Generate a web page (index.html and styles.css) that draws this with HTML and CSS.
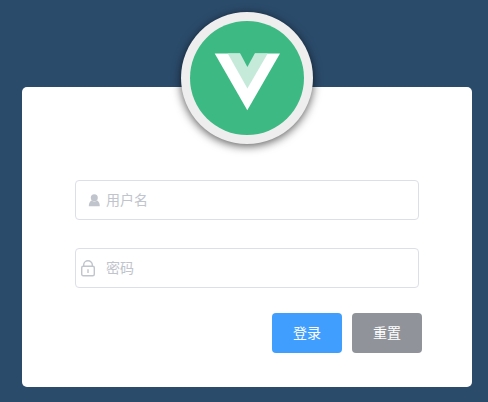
FILE: index.html
```html
<!DOCTYPE html>
<html lang="zh-CN">
<head>
<meta charset="utf-8">
<title>登录</title>
<link rel="stylesheet" href="styles.css">
</head>
<body>
<main class="login-card">
  <div class="avatar">
    <svg viewBox="190 21 114 114" width="114" height="114">
      <circle cx="247" cy="78" r="57" fill="#3db983"/>
      <path d="M214.7 53.5H280L247.3 110.3z" fill="#fff"/>
      <path d="M227.7 53.5H267.7L247.4 88.5z" fill="#c5eada"/>
      <path d="M240 53H255L247.4 67z" fill="#3db983"/>
    </svg>
  </div>
  <form class="login-form">
    <label class="field">
      <svg class="icon-user" width="12" height="13" viewBox="0 0 12 13" fill="#c0c4cc">
        <circle cx="6.3" cy="3.8" r="3.5"/>
        <path d="M3.4 6.4Q6.3 8.4 9.2 6.4 11.8 8 11.8 12.2H.8Q.8 8 3.4 6.4z"/>
      </svg>
      <input class="input" type="text" placeholder="用户名">
    </label>
    <label class="field">
      <svg class="icon-lock" width="14" height="17" viewBox="0 0 14 17" fill="none" stroke="#c0c4cc" stroke-width="1.4">
        <rect x=".7" y="6.2" width="12.6" height="9.6" rx="1.5"/>
        <path d="M2.7 6V4.8a4.3 4.1 0 0 1 8.6 0V6M7 9.3v3.6"/>
      </svg>
      <input class="input" type="password" placeholder="密码">
    </label>
    <div class="actions">
      <button class="btn btn-primary" type="button">登录</button>
      <button class="btn btn-info" type="button">重置</button>
    </div>
  </form>
</main>
</body>
</html>
```
FILE: styles.css
```css
* {
  box-sizing: border-box;
}

body {
  margin: 0;
  height: 402px;
  padding: 87px 16px 15px 22px;
  overflow: hidden;
  background: #2b4b6b;
  font-family: "Noto Sans CJK SC", sans-serif;
}

.login-card {
  display: flex;
  flex-direction: column;
  width: 450px;
  height: 300px;
  background: #fff;
  border-radius: 5px;
}

.avatar {
  width: 132px;
  height: 132px;
  margin: -75px auto 0;
  padding: 9px;
  border-radius: 50%;
  background: #eee;
  box-shadow: 0 2px 10px rgba(0, 0, 0, 0.65);
}

.avatar svg {
  display: block;
}

.login-form {
  display: flex;
  flex-direction: column;
  width: 344px;
  margin: 36px 0 0 53px;
}

.field {
  display: flex;
  align-items: center;
  height: 40px;
  margin-bottom: 28px;
  border: 1px solid #dcdfe6;
  border-radius: 4px;
}

.icon-user {
  margin: 0 6px 0 12px;
}

.icon-lock {
  margin: 0 11px 0 5px;
}

.input {
  flex: 1;
  min-width: 0;
  height: 38px;
  padding: 0 0 2px;
  border: 0;
  outline: 0;
  background: transparent;
  font: 14px "Noto Sans CJK SC", sans-serif;
}

.input::placeholder {
  color: #c0c4cc;
}

.actions {
  display: flex;
  justify-content: flex-end;
  gap: 10px;
  margin: -3px -3px 0 0;
}

.btn {
  width: 70px;
  height: 40px;
  padding: 0 0 2px;
  border: 0;
  border-radius: 4px;
  color: #fff;
  font: 14px "Noto Sans CJK SC", sans-serif;
}

.btn-primary {
  background: #409eff;
}

.btn-info {
  background: #909399;
}
```
